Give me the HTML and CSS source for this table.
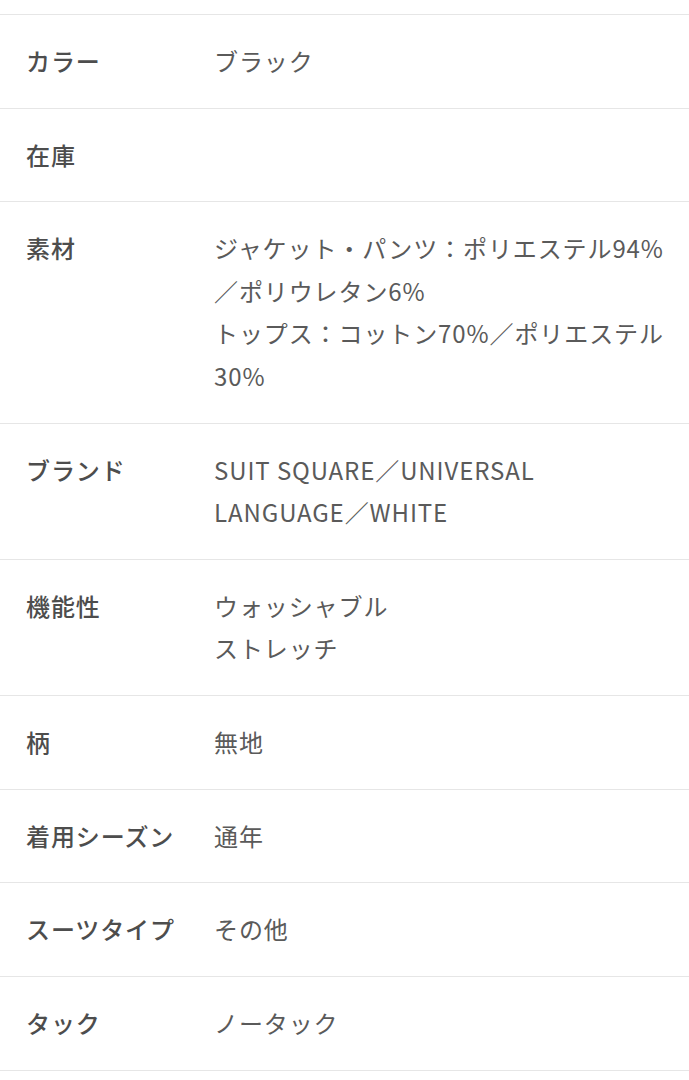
FILE: index.html
```html
<!DOCTYPE html>
<html lang="ja">
<head>
    <meta charset="UTF-8">
    <meta name="viewport" content="width=device-width, initial-scale=1.0">
    <title>商品詳細</title>
    <link rel="stylesheet" href="styles.css">
</head>
<body>
    <div class="spec">
        <table class="spec-table">
            <tbody>
                <tr>
                    <th>カラー</th>
                    <td>ブラック</td>
                </tr>
                <tr>
                    <th>在庫</th>
                    <td></td>
                </tr>
                <tr>
                    <th>素材</th>
                    <td>ジャケット・パンツ：ポリエステル94%<br>／ポリウレタン6%<br>トップス：コットン70%／ポリエステル<br>30%</td>
                </tr>
                <tr>
                    <th>ブランド</th>
                    <td>SUIT SQUARE／UNIVERSAL<br>LANGUAGE／WHITE</td>
                </tr>
                <tr>
                    <th>機能性</th>
                    <td>ウォッシャブル<br>ストレッチ</td>
                </tr>
                <tr>
                    <th>柄</th>
                    <td>無地</td>
                </tr>
                <tr>
                    <th>着用シーズン</th>
                    <td>通年</td>
                </tr>
                <tr>
                    <th>スーツタイプ</th>
                    <td>その他</td>
                </tr>
                <tr>
                    <th>タック</th>
                    <td>ノータック</td>
                </tr>
            </tbody>
        </table>
    </div>
</body>
</html>
```

FILE: styles.css
```css
body {
    margin: 0;
    background-color: #fff;
    font-family: "Noto Sans CJK JP", "Noto Sans", sans-serif;
    color: #595959;
}
.spec {
    padding-top: 14px;
}
.spec-table {
    width: 100%;
    border-collapse: collapse;
    border-top: 1px solid #e6e6e6;
}
.spec-table tr {
    border-bottom: 1px solid #e6e6e6;
}
.spec-table th,
.spec-table td {
    padding: 25.1px 0;
    font-size: 24px;
    line-height: 42.5px;
    letter-spacing: 0.9px;
    vertical-align: top;
    text-align: left;
}
.spec-table th {
    width: 188px;
    padding-left: 26px;
    font-weight: 500;
    color: #4d4d4d;
    white-space: nowrap;
}
.spec-table td {
    padding-right: 10px;
    font-weight: 400;
    color: #5a5a5a;
    white-space: nowrap;
}
```
